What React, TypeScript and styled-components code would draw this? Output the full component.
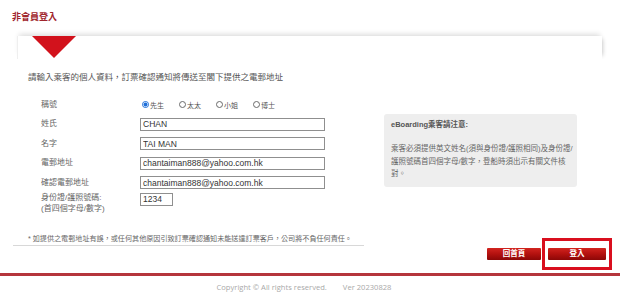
import React from 'react';
import styled, { createGlobalStyle } from 'styled-components';

const GlobalStyle = createGlobalStyle`
  html, body {
    margin: 0;
    padding: 0;
    background: #ffffff;
  }
  body {
    font-family: 'Liberation Sans', Arial, 'Noto Sans CJK TC', sans-serif;
    color: #555;
  }
`;

const cjk = `'Liberation Sans', Arial, 'Noto Sans CJK TC', sans-serif`;

const Page = styled.div`
  width: 620px;
  height: 293px;
  overflow: hidden;
  display: flex;
  flex-direction: column;
`;

const PageTitle = styled.h1`
  margin: 0;
  padding: 12px 0 0 12px;
  height: 24px;
  font-family: ${cjk};
  font-size: 9px;
  line-height: 11px;
  font-weight: bold;
  color: #a0242c;
`;

const PanelCap = styled.div`
  margin: 0 18px 0 17px;
  height: 23px;
  padding-left: 14px;
  background: #fff;
  box-shadow: 0 -4px 5px -2px rgba(0, 0, 0, 0.13), 4px 0 4px -3px rgba(0, 0, 0, 0.18);
  border-left: 1px solid #efefef;
`;

const Triangle = styled.div`
  width: 0;
  height: 0;
  border-left: 22px solid transparent;
  border-right: 22px solid transparent;
  border-top: 22px solid #d2121c;
`;

const Body = styled.div`
  position: relative;
  background: #fff;
  padding: 12px 0 0 28px;
`;

const Intro = styled.p`
  margin: 0;
  font-family: ${cjk};
  font-size: 8.5px;
  line-height: 12px;
  color: #555;
`;

const Columns = styled.div`
  display: flex;
  align-items: flex-start;
  margin-top: 12px;
`;

const Form = styled.div`
  display: grid;
  grid-template-columns: 99px 186px;
  grid-auto-rows: 19.5px;
  align-items: center;
  margin-left: 13px;
`;

const Label = styled.label<{ $multi?: boolean }>`
  font-family: ${cjk};
  font-size: 8px;
  line-height: ${(p) => (p.$multi ? '11px' : '10px')};
  color: #666;
  align-self: ${(p) => (p.$multi ? 'start' : 'center')};
  margin-top: ${(p) => (p.$multi ? '-1px' : '0')};
`;

const TextBox = styled.input<{ $w?: number }>`
  box-sizing: border-box;
  width: ${(p) => p.$w ?? 185}px;
  height: 13px;
  margin: 0;
  padding: 0 2px;
  border: 1px solid #8f8f8f;
  border-radius: 0;
  font-family: 'Liberation Sans', Arial, sans-serif;
  font-size: 8.5px;
  color: #333;
  outline: none;
  align-self: ${(p) => (p.$w ? 'start' : 'center')};
`;

const RadioGroup = styled.div`
  display: flex;
  align-items: center;
  margin-left: 2px;
`;

const RadioItem = styled.label`
  display: flex;
  align-items: center;
  width: 37px;
  font-family: ${cjk};
  font-size: 7px;
  color: #555;
`;

const RadioDot = styled.span<{ $on?: boolean }>`
  box-sizing: border-box;
  width: 7px;
  height: 7px;
  border-radius: 50%;
  border: 1px solid ${(p) => (p.$on ? '#1e6fd9' : '#6a6a6a')};
  background: ${(p) => (p.$on ? 'radial-gradient(circle, #1e6fd9 0 1.8px, #fff 2.2px)' : '#fff')};
  margin-right: 1px;
  flex-shrink: 0;
`;

const Notice = styled.aside`
  box-sizing: border-box;
  width: 193px;
  height: 73px;
  margin: 19px 0 0 58px;
  padding: 6px 6px 0 7px;
  background: #eeeeee;
  border-radius: 3px;
`;

const NoticeTitle = styled.div`
  font-family: ${cjk};
  font-size: 7.5px;
  line-height: 10px;
  font-weight: bold;
  color: #555;
`;

const NoticeText = styled.p`
  margin: 13px 0 0;
  font-family: ${cjk};
  font-size: 7.5px;
  line-height: 12.5px;
  color: #666;
  white-space: nowrap;
`;

const Disclaimer = styled.p`
  margin: 23px 0 0;
  font-family: ${cjk};
  font-size: 7.1px;
  line-height: 9px;
  color: #666;
  white-space: nowrap;
`;

const Rule = styled.div`
  margin: 1px 0 0 13px;
  width: 351px;
  height: 1px;
  background: #d8d8d8;
`;

const Actions = styled.div`
  display: flex;
  justify-content: flex-end;
  gap: 7px;
  padding-right: 14px;
  margin-top: 2px;
`;

const RedButton = styled.button<{ $w: number }>`
  width: ${(p) => p.$w}px;
  height: 12px;
  padding: 0;
  border: none;
  border-radius: 1px;
  background: linear-gradient(to bottom, #d2241f 0%, #b3110f 50%, #8c0707 100%);
  color: #fff;
  font-family: ${cjk};
  font-size: 7.5px;
  font-weight: bold;
  line-height: 12px;
  cursor: pointer;
`;

const Highlight = styled.span`
  position: relative;
  display: inline-flex;
  &::after {
    content: '';
    position: absolute;
    left: -6px;
    right: -6px;
    top: -10px;
    bottom: -10px;
    border: 3px solid #d90f1e;
    pointer-events: none;
  }
`;

const Footer = styled.footer`
  margin-top: 13px;
  border-top: 3px solid #b5353c;
  padding-top: 6px;
  text-align: center;
  font-family: 'Open Sans', 'Liberation Sans', sans-serif;
  font-size: 7.6px;
  line-height: 10px;
  color: #a9a9a9;
  padding-right: 12px;
`;

const Version = styled.span`
  margin-left: 16px;
`;

const titles = ['先生', '太太', '小姐', '博士'];

export default function App() {
  return (
    <>
      <GlobalStyle />
      <Page>
        <PageTitle>非會員登入</PageTitle>
        <PanelCap>
          <Triangle />
        </PanelCap>
        <Body>
          <Intro>請輸入乘客的個人資料，訂票確認通知將傳送至閣下提供之電郵地址</Intro>
          <Columns>
            <Form>
              <Label>稱號</Label>
              <RadioGroup>
                {titles.map((t, i) => (
                  <RadioItem key={t}>
                    <RadioDot $on={i === 0} />
                    {t}
                  </RadioItem>
                ))}
              </RadioGroup>
              <Label>姓氏</Label>
              <TextBox defaultValue="CHAN" />
              <Label>名字</Label>
              <TextBox defaultValue="TAI MAN" />
              <Label>電郵地址</Label>
              <TextBox defaultValue="chantaiman888@yahoo.com.hk" />
              <Label>確認電郵地址</Label>
              <TextBox defaultValue="chantaiman888@yahoo.com.hk" />
              <Label $multi>
                身份證/護照號碼:
                <br />
                (首四個字母/數字)
              </Label>
              <TextBox $w={33} defaultValue="1234" />
            </Form>
            <Notice>
              <NoticeTitle>eBoarding乘客請注意:</NoticeTitle>
              <NoticeText>
                乘客必須提供英文姓名(須與身份證/護照相同)及身份證/
                <br />
                護照號碼首四個字母/數字，登船時須出示有關文件核
                <br />
                對。
              </NoticeText>
            </Notice>
          </Columns>
          <Disclaimer>
            * 如提供之電郵地址有誤，或任何其他原因引致訂票確認通知未能送達訂票客戶，公司將不負任何責任。
          </Disclaimer>
        </Body>
        <Rule />
        <Actions>
          <RedButton $w={54}>回首頁</RedButton>
          <Highlight>
            <RedButton $w={58}>登入</RedButton>
          </Highlight>
        </Actions>
        <Footer>
          Copyright © All rights reserved.<Version>Ver 20230828</Version>
        </Footer>
      </Page>
    </>
  );
}
